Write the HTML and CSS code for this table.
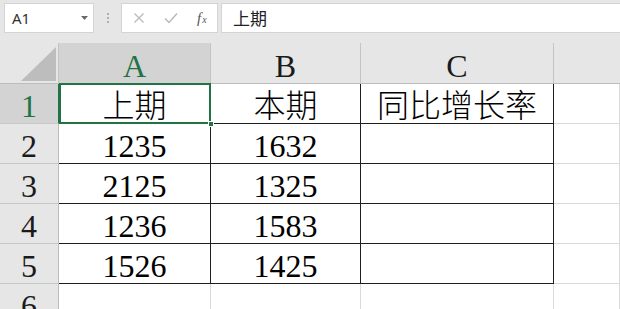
FILE: index.html
```html
<!DOCTYPE html>
<html lang="zh">
<head>
<meta charset="utf-8">
<title>Sheet</title>
<link rel="stylesheet" href="styles.css">
</head>
<body>
<div class="toolbar">
  <div class="namebox">
    <span class="ref">A1</span>
    <svg class="caret" width="7" height="4" viewBox="0 0 7 4"><path d="M0 0H7L3.5 4Z" fill="#6a6a6a"/></svg>
  </div>
  <div class="dots"><i></i><i></i><i></i></div>
  <div class="fbtns">
    <svg width="12" height="12" viewBox="0 0 12 12"><path d="M1.5 1.5L10.5 10.5M10.5 1.5L1.5 10.5" stroke="#b9b9b9" stroke-width="1.3" fill="none"/></svg>
    <svg width="14" height="12" viewBox="0 0 14 12"><path d="M1 6.5L5 10.5L13 1.5" stroke="#b9b9b9" stroke-width="1.5" fill="none"/></svg>
    <span class="fx"><i>f</i><span class="fxx">x</span></span>
  </div>
  <div class="finput">上期</div>
</div>
<div class="sheet">
  <div class="hd corner"><span class="tri"></span></div>
  <div class="hd col sel">A</div>
  <div class="hd col">B</div>
  <div class="hd col">C</div>
  <div class="hd col last"></div>

  <div class="rh sel">1</div>
  <div class="c t active">上期</div>
  <div class="c t">本期</div>
  <div class="c t">同比增长率</div>
  <div class="c g"></div>

  <div class="rh">2</div>
  <div class="c t">1235</div>
  <div class="c t">1632</div>
  <div class="c t"></div>
  <div class="c g"></div>

  <div class="rh">3</div>
  <div class="c t">2125</div>
  <div class="c t">1325</div>
  <div class="c t"></div>
  <div class="c g"></div>

  <div class="rh">4</div>
  <div class="c t">1236</div>
  <div class="c t">1583</div>
  <div class="c t"></div>
  <div class="c g"></div>

  <div class="rh">5</div>
  <div class="c t">1526</div>
  <div class="c t">1425</div>
  <div class="c t"></div>
  <div class="c g"></div>

  <div class="rh">6</div>
  <div class="c g"></div>
  <div class="c g"></div>
  <div class="c g"></div>
  <div class="c g"></div>
</div>
</body>
</html>
```

FILE: styles.css
```css
html, body {
  margin: 0;
  padding: 0;
  background: #ffffff;
  overflow: hidden;
}

body {
  width: 620px;
  height: 309px;
  font-family: "Liberation Serif", "Noto Sans CJK SC", serif;
}

.toolbar {
  height: 43px;
  background: #e6e6e6;
  display: flex;
  align-items: flex-start;
  padding-top: 3px;
  box-sizing: border-box;
}

.namebox {
  margin-left: 4px;
  width: 90px;
  height: 30px;
  box-sizing: border-box;
  background: #ffffff;
  border: 1px solid #d4d4d4;
  display: flex;
  align-items: center;
  justify-content: space-between;
  padding: 0 5px 0 7px;
}

.ref {
  font-family: "Noto Sans", "Liberation Sans", sans-serif;
  font-size: 15px;
  color: #333333;
}

.caret {
  display: block;
}

.dots {
  width: 27px;
  height: 30px;
  display: flex;
  flex-direction: column;
  align-items: center;
  justify-content: center;
  gap: 2px;
}

.dots i {
  display: block;
  width: 2px;
  height: 2px;
  background: #b0b0b0;
}

.fbtns {
  width: 97px;
  height: 30px;
  box-sizing: border-box;
  background: #ffffff;
  border: 1px solid #d4d4d4;
  display: flex;
  align-items: center;
  padding-left: 11px;
  gap: 19px;
}

.fbtns svg {
  display: block;
}

.fx {
  font-family: "Liberation Serif", serif;
  font-style: italic;
  font-size: 15px;
  color: #555555;
  display: flex;
  align-items: baseline;
}

.fx i {
  font-style: italic;
}

.fxx {
  font-size: 10px;
  margin-left: 1px;
}

.finput {
  margin-left: 3px;
  flex: 1;
  height: 30px;
  box-sizing: border-box;
  background: #ffffff;
  border: 1px solid #d4d4d4;
  border-right: none;
  font-family: "Noto Sans CJK SC", sans-serif;
  font-size: 17px;
  line-height: 28px;
  padding-left: 11px;
  color: #222222;
}

.sheet {
  display: grid;
  grid-template-columns: 59px 152px 150px 193px 1fr;
  grid-template-rows: 41px repeat(5, 40px) 26px;
  overflow: hidden;
}

.sheet > div {
  box-sizing: border-box;
  border-right: 1px solid #d9d9d9;
  border-bottom: 1px solid #d9d9d9;
  font-size: 32px;
  font-weight: 300;
  text-align: center;
  line-height: 40px;
  padding-top: 2px;
  color: #000000;
}

.sheet > .hd {
  background: #e6e6e6;
  border-right: 1px solid #c4c4c4;
  border-bottom: 1px solid #bdbdbd;
  padding-top: 3px;
  color: #1a1a1a;
}

.sheet > .hd.last {
  border-right: none;
}

.sheet > .hd.sel {
  background: #d3d3d3;
  color: #217346;
  border-bottom-color: #217346;
}

.corner {
  display: flex;
  align-items: flex-end;
  justify-content: flex-end;
  padding: 0 2px 2px 0 !important;
}

.tri {
  display: block;
  width: 35px;
  height: 34px;
  background: #bdbdbd;
  clip-path: polygon(100% 0, 100% 100%, 0 100%);
}

.sheet > .rh {
  background: #e6e6e6;
  border-right: 1px solid #bdbdbd;
  border-bottom: 1px solid #c8c8c8;
  color: #1a1a1a;
}

.sheet > .rh.sel {
  background: #d3d3d3;
  color: #217346;
  border-right-color: #217346;
}

.sheet > .c.t {
  border-right: 1px solid #1e1e1e;
  border-bottom: 1px solid #1e1e1e;
}

.sheet > .c.g {
  border-right: 1px solid #dadada;
  border-bottom: 1px solid #dadada;
}

.active {
  position: relative;
}

.active::before {
  content: "";
  position: absolute;
  left: 0;
  top: -1px;
  right: -1px;
  bottom: -1px;
  border: 2px solid #217346;
  pointer-events: none;
}

.active::after {
  content: "";
  position: absolute;
  right: -4px;
  bottom: -4px;
  width: 6px;
  height: 6px;
  background: #217346;
  border: 1px solid #ffffff;
  box-sizing: border-box;
}
```
